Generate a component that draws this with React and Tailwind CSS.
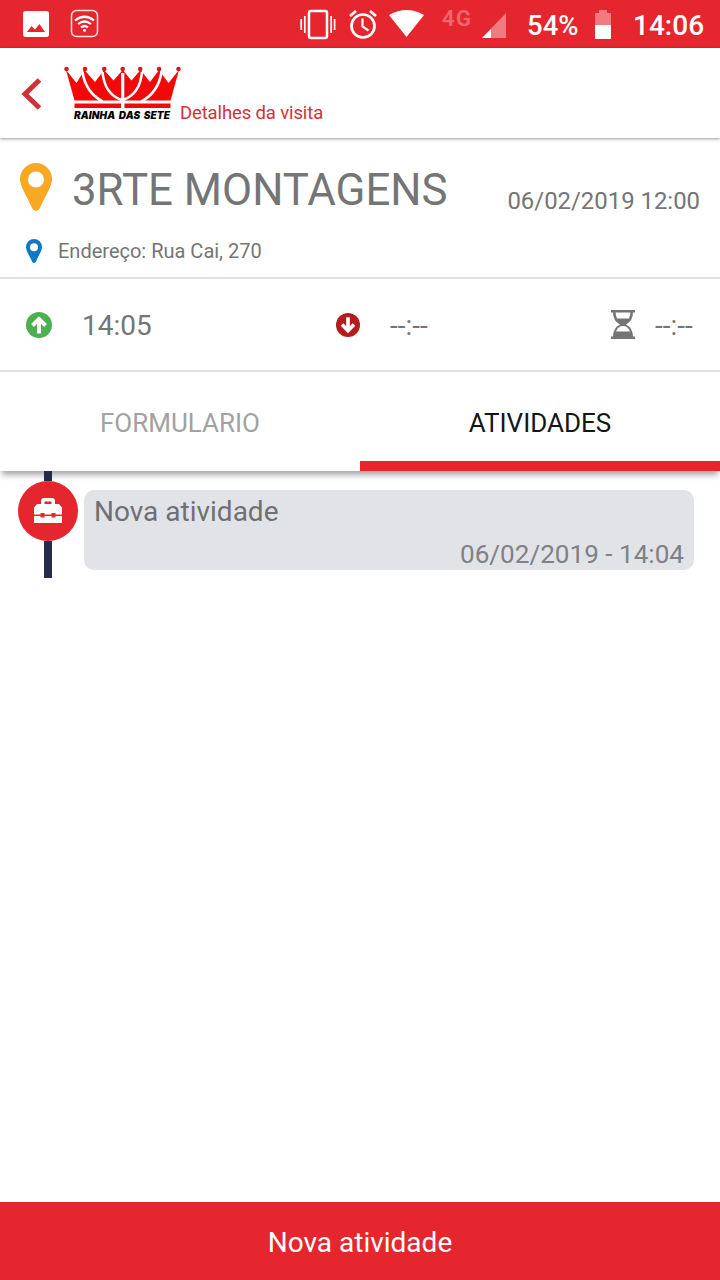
import React from 'react';

function StatusBar() {
  return (
    <div className="flex h-12 shrink-0 items-center bg-[#e5262e] text-white">
      <svg className="h-12 w-[508px]" viewBox="0 0 508 48" fill="none">
        <path fillRule="evenodd" fill="#fff" d="M25.500 11h21q2.500 0 2.500 2.500v21q0 2.500-2.500 2.500h-21q-2.500 0-2.500-2.500v-21q0-2.500 2.500-2.500ZM27 32h18l-5.500-8-4.500 5.500-3.500-3.500Z" />
        <rect x="71.500" y="10.500" width="26" height="26" rx="5" stroke="#ffe6e6" strokeWidth="1.500" />
        <g stroke="#fff" strokeWidth="2.200">
          <path d="M75 20.500q9.500-7.500 19 0M78 24q6.500-5 13 0M81 27.300q3.500-2.600 7 0" />
          <circle cx="84.500" cy="30.300" r="1.500" fill="#fff" stroke="none" />
          <rect x="309" y="11" width="18" height="27" rx="2" strokeWidth="2.500" />
          <path d="M304.800 16v17M301.200 19v11M331.200 16v17M334.600 19v11" strokeWidth="1.700" />
          <circle cx="363" cy="26" r="11.500" strokeWidth="2.700" />
          <path d="M362.500 18.500v8l6 4" strokeWidth="2.200" />
          <path d="m350 16 6-5M376 16l-6-5" strokeWidth="2.800" />
        </g>
        <path fill="#fff" d="M389 15q17.500-10 35 0L406.500 37Z" />
        <path fill="#f17c80" d="M482 38h24V13Z" />
        <path fill="#fff" d="M482 38h9v-9Z" />
        <text x="442" y="26" fill="#f1666c" fontFamily="Roboto" fontSize="22" fontWeight="600" textLength="29">4G</text>
      </svg>
      <span className="ml-[19px] w-[66px] pt-[4px] text-[27.500px] font-medium">54%</span>
      <svg className="h-12 w-[20px]" viewBox="593 0 20 48">
        <path fill="#f17c80" d="M595 13h4v-3h8v3h4v13h-16Z" />
        <path fill="#fff" d="M595 25h16v14h-16Z" />
      </svg>
      <span className="ml-[20px] pt-[3px] text-[28px] font-medium">14:06</span>
    </div>
  );
}

const jewels = [66.5, 85, 104.3, 122.7, 140.2, 159, 178.5];

function Logo() {
  return (
    <svg className="h-[60px] w-[120px]" viewBox="62 62 120 60">
      <path fill="#f20808" d="M66 70 76.500 83 84.500 70 95 82 104 70 113.500 80.500 122.700 70 131.500 80.500 140.500 70 150 82 159 70 168.500 83 179 70 170.500 100.500H74.500Z" />
      <g fill="none" stroke="#fff" strokeWidth="2.600">
        <path d="M82.500 72q3 20 20 29.500M102.500 72q2 22 19 28M142 72q-2 22-19 28M161.500 72q-3 20-20 29.500" />
        <path d="M122.700 73v28" strokeWidth="3.200" />
      </g>
      <g fill="#d81820">
        {jewels.map((x) => <circle key={x} cx={x} cy="69" r="2.300" />)}
      </g>
      <path fill="#f20808" d="M74.500 103.500h46.500v4.500H74.500ZM124.500 103.500h46v4.500h-46Z" />
      <text x="74" y="119" fontSize="10" fontWeight="900" fontStyle="italic" fontFamily="Inter" fill="#000" textLength="96" wordSpacing="1.500">RAINHA DAS SETE</text>
    </svg>
  );
}

function Pin({ className }) {
  return (
    <svg className={className} viewBox="0 0 32 48" fill="currentColor">
      <path fillRule="evenodd" d="M16 0a16 16 0 0 1 16 16c0 8-7 17-12 29q-1.500 3-4 3t-4-3C7 33 0 24 0 16A16 16 0 0 1 16 0Zm0 8.500a8 8 0 1 0 0 16 8 8 0 0 0 0-16Z" />
    </svg>
  );
}

function CircleArrow({ className }) {
  return (
    <svg className={className} viewBox="0 0 26 26">
      <circle cx="13" cy="13" r="13" fill="currentColor" />
      <path d="M13 21.500V7M6.500 13.500 13 7l6.500 6.500" fill="none" stroke="#fff" strokeWidth="4" />
    </svg>
  );
}

export default function App() {
  return (
    <div className="flex h-[1280px] w-[720px] flex-col overflow-hidden bg-white font-['Roboto',sans-serif] leading-none whitespace-nowrap text-[#757575]">
      <StatusBar />
      <header className="z-10 flex h-[90px] shrink-0 items-start shadow-[0_1px_3px_rgba(0,0,0,0.4)]">
        <svg className="mt-[30px] ml-[21px] h-[32px] w-[21px]" viewBox="0 0 21 32" fill="none" stroke="#d0303a" strokeWidth="5">
          <path d="M18.500 2 4 16l14.500 14" />
        </svg>
        <div className="mt-[14px] ml-[20px]"><Logo /></div>
        <span className="mt-[56px] -ml-[2px] text-[18.500px] tracking-[-0.130px] text-[#d4303a]">Detalhes da visita</span>
      </header>
      <section className="h-[141px] shrink-0 border-b-2 border-[#e0e0e0]">
        <div className="flex h-[86px] items-start">
          <Pin className="mt-[25px] ml-[20px] h-[48px] w-[32px] text-[#f8a923]" />
          <h1 className="mt-[31px] ml-[20px] text-[43.800px]">3RTE MONTAGENS</h1>
          <span className="mt-[52px] mr-[20px] ml-auto text-[23.900px]">06/02/2019 12:00</span>
        </div>
        <div className="flex h-[53px] items-center">
          <Pin className="ml-[26px] h-[24px] w-[16px] text-[#0d78c4]" />
          <span className="ml-[16px] text-[20px]">Endereço: Rua Cai, 270</span>
        </div>
      </section>
      <section className="flex h-[93px] shrink-0 items-center border-b-2 border-[#e0e0e0]">
        <CircleArrow className="ml-[26px] size-[26px] text-[#4caf50]" />
        <span className="ml-[30px] w-[254px] pt-[3px] text-[28px]">14:05</span>
        <CircleArrow className="size-[24px] rotate-180 text-[#b71c1c]" />
        <span className="ml-[30px] w-[221px] pt-[3px] text-[28px]">--:--</span>
        <svg className="h-[29px] w-[24px]" viewBox="0 0 24 29" fill="#757575">
          <path d="M0 0h24v2.500H0ZM0 26.500h24V29H0Z" />
          <path fillRule="evenodd" d="M2 2h20q0 9-7 12.500Q22 18 22 27H2q0-9 7-12.500Q2 11 2 2Zm2.500 0q0 3 1.500 6.500h12q1.500-3.500 1.500-6.500ZM5 21.500h14Q17 16 12 16t-7 5.500Z" />
        </svg>
        <span className="ml-[20px] pt-[3px] text-[28px]">--:--</span>
      </section>
      <nav className="z-10 flex h-[99px] shrink-0 bg-white text-[26px] shadow-[0_6px_6px_-2px_rgba(0,0,0,0.35)]">
        <div className="flex w-1/2 items-center justify-center pt-[2px] text-[#a2a2a2]">FORMULARIO</div>
        <div className="flex w-1/2 items-center justify-center border-b-10 border-[#e5262e] pt-[12px] text-[#151515]">ATIVIDADES</div>
      </nav>
      <main className="flex flex-1 items-start">
        <div className="z-20 ml-[18px] flex h-[107px] w-[60px] flex-col items-center">
          <div className="h-[10px] w-[8px] bg-[#252c48]" />
          <div className="flex size-[60px] items-center justify-center rounded-full bg-[#e5262e]">
            <svg className="h-[26px] w-[28px]" viewBox="0 0 28 26" fill="#fff">
              <path fillRule="evenodd" d="M3 6h4V3q0-3 3-3h8q3 0 3 3v3h4l3 3.500v7h-6.500v-1.500h-4v1.500h-7v-1.500h-4v1.500H0v-7Zm7.500-2.500V6h7V3.500Z" />
              <path d="M0 18h6.500v1.500h4V18h7v1.500h4V18H28v7H0Z" />
            </svg>
          </div>
          <div className="h-[37px] w-[8px] bg-[#252c48]" />
        </div>
        <article className="mt-[19px] ml-[6px] flex h-[80px] w-[610px] flex-col justify-between rounded-[10px] bg-[#e2e3e7] px-[10px] pt-[8px] pb-[3px]">
          <p className="text-[28px] text-[#6f7074]">Nova atividade</p>
          <p className="text-right text-[26.100px] text-[#808186]">06/02/2019 - 14:04</p>
        </article>
      </main>
      <button className="h-[78px] shrink-0 bg-[#e5262e] pt-[4px] text-[28px] text-white">Nova atividade</button>
    </div>
  );
}
